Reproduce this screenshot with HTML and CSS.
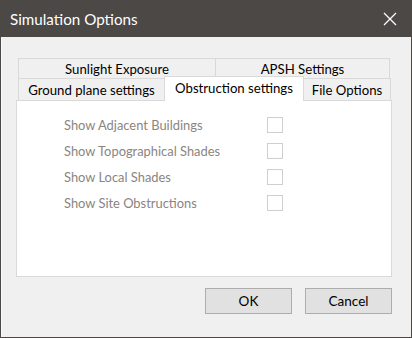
FILE: index.html
```html
<!DOCTYPE html>
<html lang="en">
<head>
    <meta charset="UTF-8">
    <title>Simulation Options</title>
    <link rel="stylesheet" href="styles.css">
</head>
<body>

    <div class="dialog">
        <div class="titlebar">
            <span class="title">Simulation Options</span>
            <svg class="close" width="14" height="14" viewBox="0 0 14 14">
                <path d="M1 1 L13 13 M13 1 L1 13" stroke="#ffffff" stroke-width="1.3" fill="none"/>
            </svg>
        </div>

        <div class="content">
            <div class="tabs">
                <div class="tab-row">
                    <div class="tab tab-sun">Sunlight Exposure</div>
                    <div class="tab tab-apsh">APSH Settings</div>
                </div>
                <div class="tab-row front">
                    <div class="tab tab-ground">Ground plane settings</div>
                    <div class="tab tab-obstruction active">Obstruction settings</div>
                    <div class="tab tab-file">File Options</div>
                </div>
            </div>

            <div class="panel">
                <div class="option">
                    <span class="label">Show Adjacent Buildings</span>
                    <span class="checkbox"></span>
                </div>
                <div class="option">
                    <span class="label">Show Topographical Shades</span>
                    <span class="checkbox"></span>
                </div>
                <div class="option">
                    <span class="label">Show Local Shades</span>
                    <span class="checkbox"></span>
                </div>
                <div class="option">
                    <span class="label">Show Site Obstructions</span>
                    <span class="checkbox"></span>
                </div>
            </div>

            <div class="buttons">
                <button class="btn">OK</button>
                <button class="btn">Cancel</button>
            </div>
        </div>
    </div>

</body>
</html>
```

FILE: styles.css
```css
/* General Styling */
* {
    margin: 0;
    padding: 0;
    box-sizing: border-box;
    font-family: 'Lato', 'Liberation Sans', sans-serif;
}

body {
    width: 412px;
    height: 338px;
    background: #4b4846;
}

.dialog {
    width: 412px;
    height: 338px;
    display: flex;
    flex-direction: column;
    border: 1px solid #4b4846;
    background: #f0f0f0;
}

/* Title bar */
.titlebar {
    height: 36px;
    display: flex;
    align-items: center;
    justify-content: space-between;
    padding: 0 14px 0 9px;
    background: #4b4846;
    color: #ffffff;
}

.titlebar .title {
    font-size: 15.2px;
}

.close {
    display: block;
}

/* Body */
.content {
    flex: 1;
    padding: 21px 20px 0 14px;
    border-left: 1px solid #fbfbfb;
}

.tabs {
    padding-left: 2px;
}

.tab-row {
    display: flex;
}

.tab {
    border: 1px solid #d9d9d9;
    margin-left: -1px;
    font-size: 13.2px;
    color: #000;
    display: flex;
    align-items: center;
    justify-content: center;
    background: #f0f0f0;
}

.tab-row .tab:first-child {
    margin-left: 0;
}

.tab-row:first-child .tab {
    height: 20px;
    border-bottom: none;
}

.tab-sun { width: 198px; }
.tab-apsh { width: 175px; }

.front .tab {
    height: 22px;
    border-bottom: none;
}

.tab-ground { width: 147px; }
.tab-obstruction { width: 140px; }
.tab-file { width: 88px; }

.tab.active {
    position: relative;
    z-index: 1;
    height: 25px;
    margin-top: -2px;
    margin-bottom: -1px;
    background: #ffffff;
    padding-bottom: 2px;
}

.panel {
    height: 177px;
    width: 376px;
    background: #ffffff;
    border: 1px solid #d9d9d9;
    padding: 11px 0 0 47px;
}

.option {
    display: grid;
    grid-template-columns: 203px 16px;
    align-items: center;
    height: 26px;
}

.option .label {
    font-size: 12.9px;
    color: #8a8581;
}

.checkbox {
    width: 16px;
    height: 16px;
    border: 1px solid #cfcfcf;
    background: #ffffff;
}

/* Buttons */
.buttons {
    display: flex;
    justify-content: flex-end;
    gap: 13px;
    margin-top: 11px;
    width: 376px;
}

.btn {
    width: 87px;
    height: 26px;
    border: 1px solid #adadad;
    background: #e1e1e1;
    font-size: 13.5px;
    color: #000;
}
```
